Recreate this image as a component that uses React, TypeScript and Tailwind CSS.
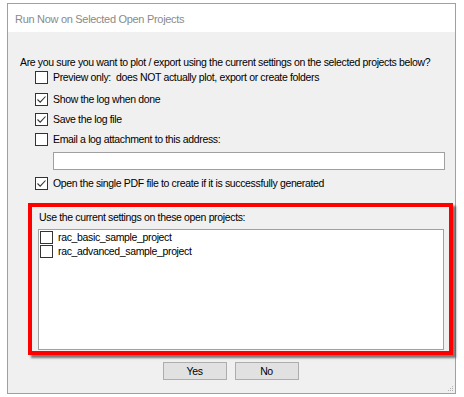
import React from 'react';

const font = { fontFamily: '"Liberation Sans", Arial, sans-serif' };

function Box({ checked }: { checked?: boolean }) {
  return (
    <span className="w-[13px] h-[13px] shrink-0 border border-[#333333] bg-white flex items-center justify-center">
      {checked && (
        <svg width="11" height="11" viewBox="0 0 11 11">
          <path d="M1.5 5.5 L4.2 8.2 L9.5 2.5" fill="none" stroke="#333" strokeWidth="1.1" />
        </svg>
      )}
    </span>
  );
}

function Check({ label, checked, className = '' }: { label: string; checked?: boolean; className?: string }) {
  return (
    <div className={`flex items-center gap-[5px] h-[13px] ${className}`}>
      <Box checked={checked} />
      <span className="whitespace-pre">{label}</span>
    </div>
  );
}

export default function App() {
  return (
    <div className="w-[464px] h-[397px] bg-white pt-[3px] pl-[7px] text-[10.5px] leading-[13px] tracking-[-0.35px] text-black" style={font}>
      <div className="w-[449px] h-[391px] border border-[#a0a0a0] flex flex-col">
        {/* title bar */}
        <div className="h-[28px] bg-white flex items-center pl-[7px] pt-[2px] text-[11px] tracking-[-0.3px] text-[#8a8a8a]">
          Run Now on Selected Open Projects
        </div>

        <div className="flex-1 bg-[#f0f0f0] flex flex-col relative">
          <p className="mt-[24px] ml-[12px] whitespace-nowrap">
            Are you sure you want to plot / export using the current settings on the selected projects below?
          </p>

          <div className="ml-[27px] mt-[2px] flex flex-col">
            <Check label="Preview only:  does NOT actually plot, export or create folders" />
            <Check label="Show the log when done" checked className="mt-[9px]" />
            <Check label="Save the log file" checked className="mt-[7px]" />
            <Check label="Email a log attachment to this address:" className="mt-[7px]" />
          </div>
          <div className="ml-[45px] mt-[6px] w-[392px] h-[18px] bg-white border border-[#a0a0a0]" />
          <div className="ml-[27px] mt-[7px]">
            <Check label="Open the single PDF file to create if it is successfully generated" checked />
          </div>

          {/* highlighted group */}
          <div className="ml-[20px] mt-[13px] w-[425px] h-[152px] border-4 border-[#ff0000] shadow-[3px_3px_2px_rgba(0,0,0,0.5)] flex flex-col">
            <div className="pl-[7px] pt-[4px] h-[22px]">Use the current settings on these open projects:</div>
            <div className="ml-[6px] w-[406px] flex-1 mb-[1px] bg-white border border-[#a0a0a0] pl-[1px] pt-[1px] flex flex-col gap-[1px]">
              <Check label="rac_basic_sample_project" />
              <Check label="rac_advanced_sample_project" />
            </div>
          </div>

          <div className="flex justify-center gap-[8px] mt-[7px] pr-[2px]">
            <button className="w-[64px] h-[18px] bg-[#e1e1e1] border border-[#adadad] text-[10.5px]">Yes</button>
            <button className="w-[64px] h-[18px] bg-[#e1e1e1] border border-[#adadad] text-[10.5px]">No</button>
          </div>

          {/* size grip */}
          <svg className="absolute right-[1px] bottom-[1px]" width="8" height="8" viewBox="0 0 8 8">
            <rect x="6" y="2" width="1" height="1" fill="#b0b0b0" />
            <rect x="4" y="4" width="1" height="1" fill="#b0b0b0" />
            <rect x="6" y="4" width="1" height="1" fill="#b0b0b0" />
            <rect x="2" y="6" width="1" height="1" fill="#b0b0b0" />
            <rect x="4" y="6" width="1" height="1" fill="#b0b0b0" />
            <rect x="6" y="6" width="1" height="1" fill="#b0b0b0" />
          </svg>
        </div>
      </div>
    </div>
  );
}
